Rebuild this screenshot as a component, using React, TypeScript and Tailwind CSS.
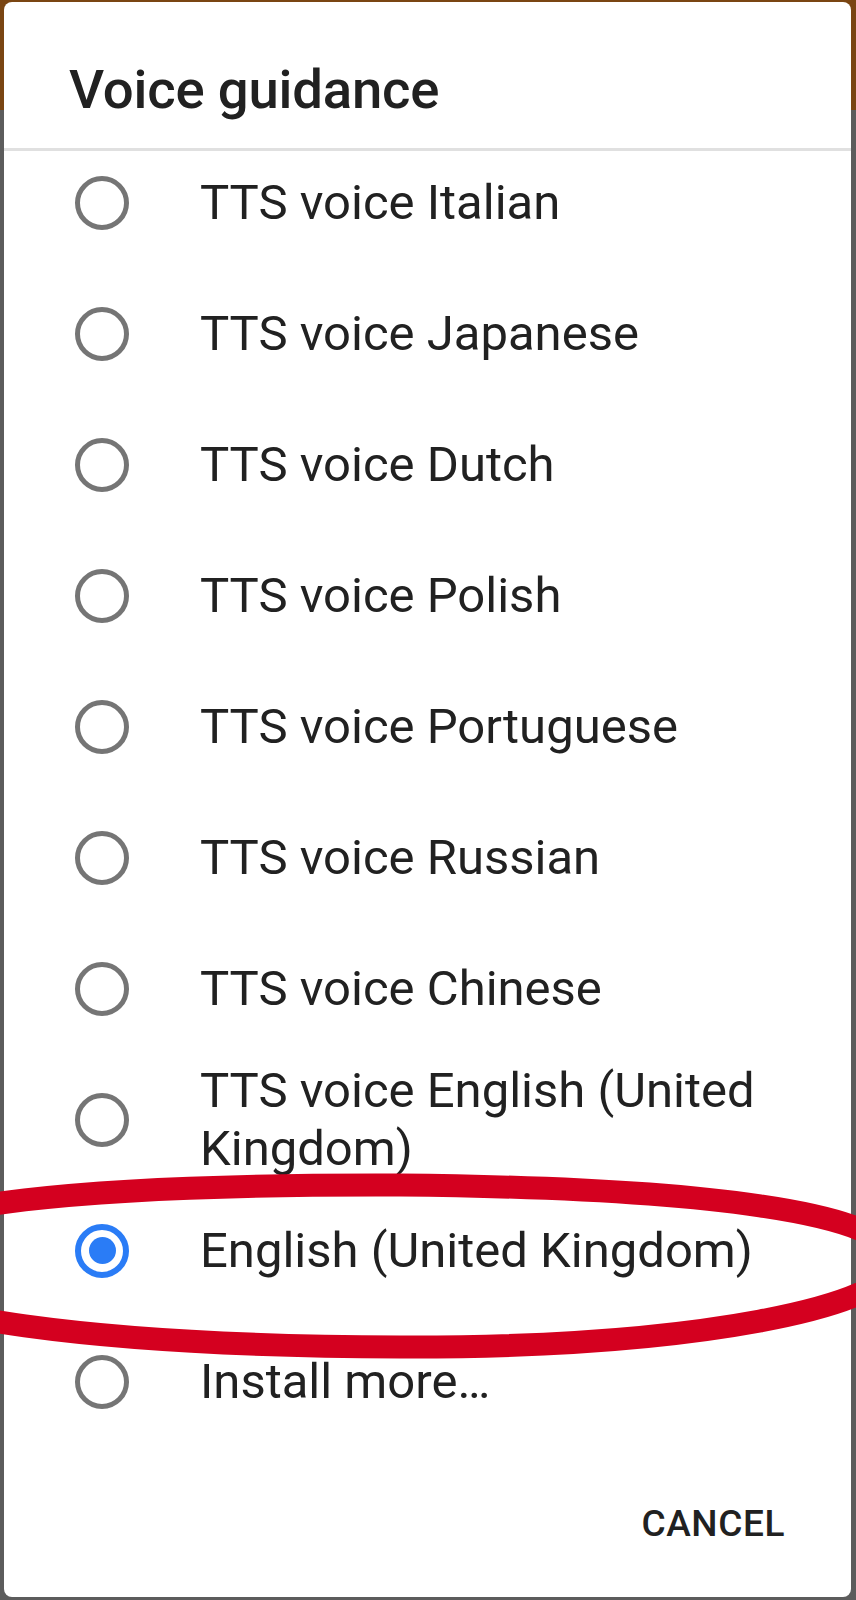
const options = [
  'TTS voice Italian',
  'TTS voice Japanese',
  'TTS voice Dutch',
  'TTS voice Polish',
  'TTS voice Portuguese',
  'TTS voice Russian',
  'TTS voice Chinese',
  'TTS voice English (United Kingdom)',
  'English (United Kingdom)',
  'Install more…',
];

const selected = 'English (United Kingdom)';

const Radio = ({ checked }: { checked: boolean }) =>
  checked ? (
    <div className="flex h-[54px] w-[54px] shrink-0 items-center justify-center rounded-full border-[6px] border-[#2a7cf6]">
      <div className="h-[27px] w-[27px] rounded-full bg-[#2a7cf6]"></div>
    </div>
  ) : (
    <div className="h-[54px] w-[54px] shrink-0 rounded-full border-[5px] border-[#757575]"></div>
  );

const App = () => {
  return (
    <div className="relative h-[1600px] w-[856px] overflow-hidden bg-[#5c5c5c] font-['Roboto',sans-serif]">
      {/* page behind the dialog */}
      <div className="h-[110px] bg-[#7a4512]"></div>

      {/* dialog */}
      <div className="absolute left-[4px] top-[2px] flex h-[1595px] w-[847px] flex-col overflow-hidden rounded-[8px] bg-white">
        {/* title */}
        <div className="flex h-[146px] shrink-0 items-center px-[65px] pt-[30px]">
          <h1 className="text-[54.5px] font-medium tracking-[-0.2px] text-[#212121]">Voice guidance</h1>
        </div>
        <div className="h-[3px] shrink-0 bg-[#e0e0e0]"></div>

        {/* options */}
        <div className="h-[1300px] shrink-0 overflow-hidden">
          <div className="-mt-[14px] flex flex-col">
            {options.map((label) => (
              <div key={label} className="flex h-[131px] items-center gap-[71px] pl-[71px] pr-[60px]">
                <Radio checked={label === selected} />
                <p className="text-[49px] leading-[58px] text-[#212121]">{label}</p>
              </div>
            ))}
          </div>
        </div>

        {/* actions */}
        <div className="flex flex-1 items-center justify-end pr-[66px]">
          <button className="text-[37px] font-medium tracking-[0.6px] text-[#212121]">CANCEL</button>
        </div>
      </div>

      {/* red annotation ring */}
      <svg className="pointer-events-none absolute left-0 top-0" width="856" height="1600" viewBox="0 0 856 1600">
        <path
          d="M -140 1262 C -140 1200 120 1184 400 1185 C 700 1188 895 1212 895 1262 C 895 1305 700 1348 400 1347 C 120 1346 -140 1320 -140 1262 Z"
          fill="none"
          stroke="#d4001f"
          strokeWidth="23"
        />
      </svg>
    </div>
  );
};

export default App;
